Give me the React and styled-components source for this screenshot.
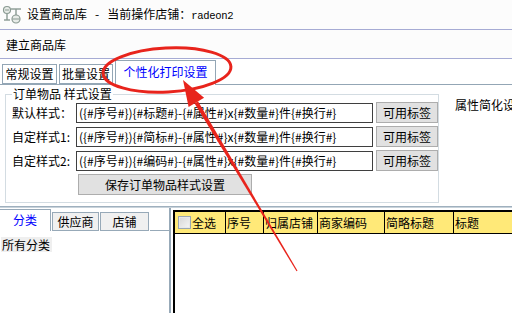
import React from "react";
import styled, { createGlobalStyle } from "styled-components";

const Global = createGlobalStyle`
  html, body { margin: 0; padding: 0; background: #ffffff; }
  body { font-family: "Noto Sans CJK SC", "Liberation Sans", sans-serif; font-size: 12px; color: #000; }
  * { box-sizing: border-box; }
`;

const Window = styled.div`
  position: relative;
  width: 512px;
  height: 313px;
  overflow: hidden;
  background: #ffffff;
  display: flex;
  flex-direction: column;
`;

const TitleBar = styled.div`
  height: 30px;
  flex: none;
  display: flex;
  align-items: center;
  padding-left: 2px;
  background: #fcfcfc;
  border-bottom: 1px solid #a6abd4;
`;

const TitleText = styled.span`
  margin-left: 5px;
  line-height: 14px;
  white-space: pre;
`;

const Mono = styled.span`
  font-family: "Liberation Mono", monospace;
  font-size: 10.5px;
  letter-spacing: -0.3px;
`;

const Toolbar = styled.div`
  height: 29px;
  flex: none;
  display: flex;
  align-items: center;
  padding: 0 0 0 6px;
  background: #fcfcfc;
  border-bottom: 1px solid #a6abd4;
`;

const TabStrip = styled.div`
  height: 26px;
  flex: none;
  display: flex;
  align-items: flex-end;
  gap: 2px;
  padding-left: 2px;
  border-bottom: 1px solid #93a6b5;
  background: #ffffff;
`;

const Tab = styled.div`
  height: ${(p) => (p.$active ? "25px" : "20px")};
  width: ${(p) => p.$w}px;
  margin-bottom: ${(p) => (p.$active ? "-1px" : "0")};
  border: 1px solid #93a6b5;
  border-bottom: ${(p) => (p.$active ? "none" : "1px solid #93a6b5")};
  background: #ffffff;
  color: ${(p) => (p.$active ? "#0000ff" : "#000")};
  display: flex;
  align-items: center;
  justify-content: center;
  padding-bottom: ${(p) => (p.$active ? "3px" : "0")};
  line-height: 14px;
`;

const SettingsArea = styled.div`
  height: 122px;
  flex: none;
  display: flex;
  align-items: flex-start;
  border-bottom: 1px solid #9fb0be;
`;

const GroupBox = styled.fieldset`
  margin: 1px 0 0 5px;
  width: 439px;
  height: 117px;
  padding: 0 0 0 6px;
  border: 1px solid #d3dce2;
  display: flex;
  flex-direction: column;
  gap: 3px;
`;

const Legend = styled.legend`
  margin-left: 0;
  padding: 0 1px;
  line-height: 16px;
`;

const Row = styled.div`
  display: flex;
  align-items: center;
  height: 21px;
`;

const RowLabel = styled.span`
  width: 64px;
  flex: none;
  line-height: 14px;
  white-space: nowrap;
`;

const StyleInput = styled.input`
  width: 297px;
  height: 20px;
  flex: none;
  border: 1px solid #3f3f3f;
  padding: 0 2px;
  font-family: "Noto Sans CJK SC", "Liberation Sans", sans-serif;
  font-size: 12px;
  color: #000;
  background: #fff;
  outline: none;
`;

const Button = styled.button`
  height: 21px;
  width: ${(p) => p.$w}px;
  margin-left: ${(p) => p.$ml || 0}px;
  flex: none;
  border: 1px solid #adadad;
  background: #e1e1e1;
  font-family: "Noto Sans CJK SC", "Liberation Sans", sans-serif;
  font-size: 12px;
  color: #000;
  padding: 0;
  line-height: 14px;
`;

const SideLabel = styled.span`
  margin: 13px 0 0 16px;
  white-space: nowrap;
  line-height: 14px;
`;

const Bottom = styled.div`
  flex: 1;
  display: flex;
  min-height: 0;
  border-top: 1px solid #c8d3db;
`;

const LeftPanel = styled.div`
  width: 171px;
  flex: none;
  display: flex;
  flex-direction: column;
  border-right: 2px solid #97a9b8;
  padding-top: 1px;
`;

const SideTabs = styled.div`
  height: 22px;
  flex: none;
  display: flex;
  align-items: flex-end;
  gap: 1px;
  &::after {
    content: "";
    flex: 1;
    align-self: flex-end;
    border-bottom: 1px solid #97a9b8;
  }
`;

const SideTab = styled.div`
  width: ${(p) => p.$w}px;
  height: ${(p) => (p.$active ? "22px" : "19px")};
  border: 1px solid #97a9b8;
  border-left: ${(p) => (p.$active ? "none" : "1px solid #97a9b8")};
  border-bottom: ${(p) => (p.$active ? "none" : "1px solid #97a9b8")};
  background: ${(p) => (p.$active ? "#ffffff" : "#f0f0f0")};
  color: ${(p) => (p.$active ? "#0000ff" : "#000")};
  display: flex;
  align-items: center;
  justify-content: center;
  line-height: 14px;
  padding-bottom: ${(p) => (p.$active ? "2px" : "0")};
`;

const TreeItem = styled.span`
  align-self: flex-start;
  margin: 6px 0 0 1px;
  padding: 0 2px 0 1px;
  background: #efefef;
  line-height: 15px;
`;

const Grid = styled.div`
  flex: 1;
  margin: 2px 0 0 2px;
  border-top: 2px solid #000;
  border-left: 2px solid #000;
  display: flex;
  flex-direction: column;
  background: #fff;
`;

const HeaderRow = styled.div`
  height: 22px;
  flex: none;
  display: flex;
  background: #ffe978;
  border-bottom: 1px solid #000;
`;

const HeadCell = styled.div`
  width: ${(p) => p.$w}px;
  flex: none;
  display: flex;
  align-items: center;
  padding-left: 1px;
  border-right: 1px solid #000;
  line-height: 14px;
  white-space: nowrap;
  overflow: hidden;
`;

const CheckBox = styled.span`
  width: 13px;
  height: 13px;
  margin: 0 1px 0 2px;
  border: 1px solid #9aa7b4;
  background: linear-gradient(135deg, #d6d6d6, #f6f6f6);
  box-shadow: inset 0 0 0 1px #e8e8e8;
`;

const Overlay = styled.svg`
  position: absolute;
  left: 0;
  top: 0;
  pointer-events: none;
`;

function AppIcon() {
  return (
    <svg width="20" height="20" viewBox="0 0 20 20">
      <circle cx="5" cy="5" r="3.5" fill="#e8ece8" stroke="#8a9a92" strokeWidth="1.2" />
      <line x1="3" y1="5" x2="7" y2="5" stroke="#8a9a92" strokeWidth="1" />
      <line x1="5" y1="9" x2="5" y2="15" stroke="#8a9a92" strokeWidth="1.4" />
      <line x1="2" y1="15" x2="8" y2="15" stroke="#8a9a92" strokeWidth="1.4" />
      <line x1="9" y1="4" x2="19" y2="4" stroke="#8a9a92" strokeWidth="1.4" />
      <line x1="14" y1="4" x2="14" y2="10" stroke="#8a9a92" strokeWidth="1.4" />
      <circle cx="14" cy="14" r="4" fill="#e8ece8" stroke="#8a9a92" strokeWidth="1.2" />
      <line x1="10.5" y1="14" x2="17.5" y2="14" stroke="#8a9a92" strokeWidth="1" />
    </svg>
  );
}

const rowsData = [
  { label: "默认样式：", value: "({#序号#}){#标题#}-{#属性#}x{#数量#}件{#换行#}" },
  { label: "自定样式1:", value: "({#序号#}){#简标#}-{#属性#}x{#数量#}件{#换行#}" },
  { label: "自定样式2:", value: "({#序号#}){#编码#}-{#属性#}x{#数量#}件{#换行#}" },
];

const columns = [
  { w: 51, label: "全选", check: true },
  { w: 38, label: "序号" },
  { w: 54, label: "归属店铺" },
  { w: 67, label: "商家编码" },
  { w: 69, label: "简略标题" },
  { w: 80, label: "标题" },
];

function Annotation() {
  const tip = [183, 80];
  const tail = [297, 271];
  const dx = tail[0] - tip[0];
  const dy = tail[1] - tip[1];
  const len = Math.hypot(dx, dy);
  const u = [dx / len, dy / len];
  const p = [-u[1], u[0]];
  const hb = [tip[0] + 26 * u[0], tip[1] + 26 * u[1]];
  const pt = (a, s) => `${(a[0] + s * p[0]).toFixed(1)},${(a[1] + s * p[1]).toFixed(1)}`;
  const head = `${tip[0]},${tip[1]} ${pt(hb, 9)} ${pt(hb, -9)}`;
  const shaft = `${pt(hb, 2)} ${pt(tail, 0.6)} ${pt(tail, -0.6)} ${pt(hb, -2)}`;
  return (
    <Overlay width="512" height="313" viewBox="0 0 512 313">
      <ellipse cx="167" cy="70" rx="64" ry="22" fill="none" stroke="#e8241c" strokeWidth="3" transform="rotate(-3 167 70)" />
      <polygon points={shaft} fill="#e8241c" />
      <polygon points={head} fill="#e8241c" />
    </Overlay>
  );
}

export default function App() {
  return (
    <>
      <Global />
      <Window>
        <TitleBar>
          <AppIcon />
          <TitleText>
            设置商品库 {"  "}-{"  "} 当前操作店铺：<Mono>radeon2</Mono>
          </TitleText>
        </TitleBar>
        <Toolbar>建立商品库</Toolbar>
        <TabStrip>
          <Tab $w={55}>常规设置</Tab>
          <Tab $w={54}>批量设置</Tab>
          <Tab $w={101} $active>个性化打印设置</Tab>
        </TabStrip>
        <SettingsArea>
          <GroupBox>
            <Legend>订单物品 样式设置</Legend>
            {rowsData.map((r) => (
              <Row key={r.label}>
                <RowLabel>{r.label}</RowLabel>
                <StyleInput readOnly value={r.value} />
                <Button $w={62} $ml={3}>可用标签</Button>
              </Row>
            ))}
            <Row>
              <Button $w={174} $ml={66}>保存订单物品样式设置</Button>
            </Row>
          </GroupBox>
          <SideLabel>属性简化设置</SideLabel>
        </SettingsArea>
        <Bottom>
          <LeftPanel>
            <SideTabs>
              <SideTab $w={51} $active>分类</SideTab>
              <SideTab $w={47}>供应商</SideTab>
              <SideTab $w={49}>店铺</SideTab>
            </SideTabs>
            <TreeItem>所有分类</TreeItem>
          </LeftPanel>
          <Grid>
            <HeaderRow>
              {columns.map((c) => (
                <HeadCell key={c.label} $w={c.w}>
                  {c.check && <CheckBox />}
                  {c.label}
                </HeadCell>
              ))}
            </HeaderRow>
          </Grid>
        </Bottom>
        <Annotation />
      </Window>
    </>
  );
}
